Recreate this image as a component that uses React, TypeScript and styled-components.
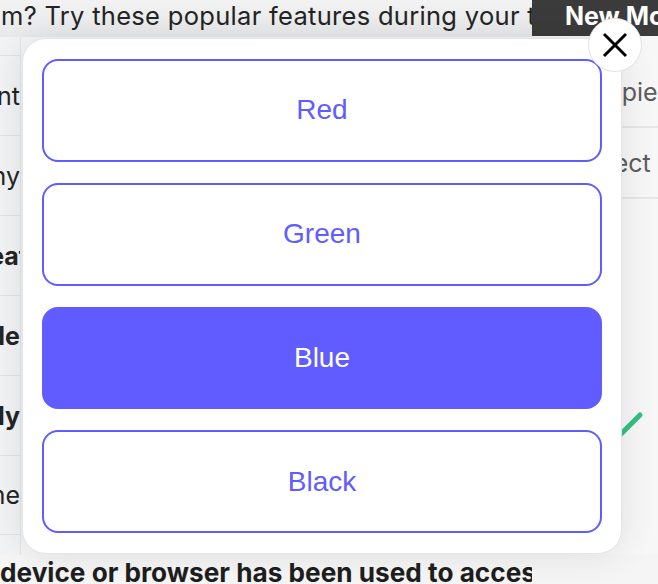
import styled, {createGlobalStyle} from "styled-components";

const GlobalStyle = createGlobalStyle`
    html, body {
        margin: 0;
        padding: 0;
        background: #f5f5f6;
    }
    * {
        box-sizing: border-box;
    }
`;

const Page = styled.div`
    position: relative;
    width: 658px;
    height: 584px;
    overflow: hidden;
    background: #f5f5f6;
    font-family: Inter, Roboto, "Liberation Sans", sans-serif;
`;

const TopBar = styled.div`
    display: flex;
    height: 37px;
`;

const Banner = styled.div`
    width: 532px;
    overflow: hidden;
    white-space: nowrap;
    background: linear-gradient(#f2f2f3, #e9eaeb);
    color: #242424;
    font-size: 25.5px;
    letter-spacing: 0.3px;
    line-height: 32px;
    padding-left: 1px;
`;

const DarkTab = styled.div`
    flex: 1;
    height: 36px;
    background: #3b3b3b;
    color: #ffffff;
    font-size: 25px;
    font-weight: 700;
    line-height: 32px;
    padding-left: 33px;
    white-space: nowrap;
    overflow: hidden;
`;

const Main = styled.div`
    display: flex;
    height: 518px;
`;

const LeftCol = styled.div`
    width: 21px;
    padding-top: 18px;
    border-right: 1px solid #e4e5e7;
    background: #f2f3f4;
    overflow: hidden;
`;

const LeftRow = styled.div<{ $bold?: boolean }>`
    height: 80px;
    border-top: 1px solid #e1e2e5;
    display: flex;
    align-items: center;
    justify-content: flex-end;
    white-space: nowrap;
    font-size: 25px;
    font-weight: ${(p) => (p.$bold ? 700 : 400)};
    color: #242424;
    &:last-child {
        border-bottom: 1px solid #e1e2e5;
    }
`;

const RowText = styled.span<{ $shift: number }>`
    margin-right: ${(p) => -p.$shift}px;
`;

const Middle = styled.div`
    flex: 1;
`;

const RightCol = styled.div`
    width: 88px;
    padding-top: 20px;
    background: #f7f7f8;
`;

const RightRow = styled.div<{ $indent: number }>`
    height: 71px;
    border-bottom: 2px solid #e6e6e9;
    display: flex;
    align-items: center;
    padding-left: ${(p) => p.$indent}px;
    white-space: nowrap;
    overflow: hidden;
    font-size: 25px;
    color: #5c5c5c;
`;

const Check = styled.svg`
    display: block;
    margin: 206px 0 0 34px;
`;

const Footer = styled.div`
    width: 532px;
    height: 29px;
    overflow: hidden;
    white-space: nowrap;
    font-size: 26.2px;
    font-weight: 700;
    line-height: 36px;
    color: #1e1e1e;
    background: #f5f5f6;
`;

const Modal = styled.div`
    position: absolute;
    left: 22px;
    top: 38px;
    width: 600px;
    height: 516px;
    padding: 20px 19px;
    background: #ffffff;
    border: 1px solid #e4e4e8;
    border-radius: 24px;
    box-shadow: 0 0 36px rgba(0, 0, 0, 0.1);
    display: flex;
    flex-direction: column;
    gap: 21px;
`;

const ColorButton = styled.button<{ $selected?: boolean }>`
    height: 103px;
    width: 100%;
    border: 2px solid #615cff;
    border-radius: 16px;
    background: ${(p) => (p.$selected ? "#615cff" : "#ffffff")};
    color: ${(p) => (p.$selected ? "#ffffff" : "#615cff")};
    font-family: "Liberation Sans", Arial, sans-serif;
    font-size: 28px;
    cursor: pointer;
`;

const CloseButton = styled.button`
    position: absolute;
    left: 588px;
    top: 18px;
    width: 54px;
    height: 54px;
    border-radius: 50%;
    border: 1px solid #e2e2e6;
    background: #ffffff;
    display: flex;
    align-items: center;
    justify-content: center;
    padding: 0;
    cursor: pointer;
`;

const colors = ["Red", "Green", "Blue", "Black"];

const leftRows = [
    {text: "Payment", bold: false, shift: 0},
    {text: "Company", bold: false, shift: 0},
    {text: "Feat", bold: true, shift: 8},
    {text: "Mode", bold: true, shift: 0},
    {text: "Only", bold: true, shift: 0},
    {text: "Name", bold: false, shift: 0},
];

function App() {
    const selected = "Blue";

    return (
        <>
            <GlobalStyle/>
            <Page>
                <TopBar>
                    <Banner>m? Try these popular features during your trial</Banner>
                    <DarkTab>New Model</DarkTab>
                </TopBar>
                <Main>
                    <LeftCol>
                        {leftRows.map((row) => (
                            <LeftRow key={row.text} $bold={row.bold}>
                                <RowText $shift={row.shift}>{row.text}</RowText>
                            </LeftRow>
                        ))}
                    </LeftCol>
                    <Middle/>
                    <RightCol>
                        <RightRow $indent={1}>Recipient</RightRow>
                        <RightRow $indent={7}>Select</RightRow>
                        <Check width="40" height="40" viewBox="0 0 40 40">
                            <path d="M4 22 L14 32 L36 10" fill="none" stroke="#2fc37f" strokeWidth="5"
                                  strokeLinecap="round" strokeLinejoin="round"/>
                        </Check>
                    </RightCol>
                </Main>
                <Footer>device or browser has been used to access</Footer>
                <Modal>
                    {colors.map((c) => (
                        <ColorButton key={c} $selected={c === selected}>{c}</ColorButton>
                    ))}
                </Modal>
                <CloseButton aria-label="Close">
                    <svg width="26" height="26" viewBox="0 0 26 26">
                        <path d="M2 2 L24 24 M24 2 L2 24" stroke="#000" strokeWidth="3" strokeLinecap="butt"/>
                    </svg>
                </CloseButton>
            </Page>
        </>
    );
}

export default App;
